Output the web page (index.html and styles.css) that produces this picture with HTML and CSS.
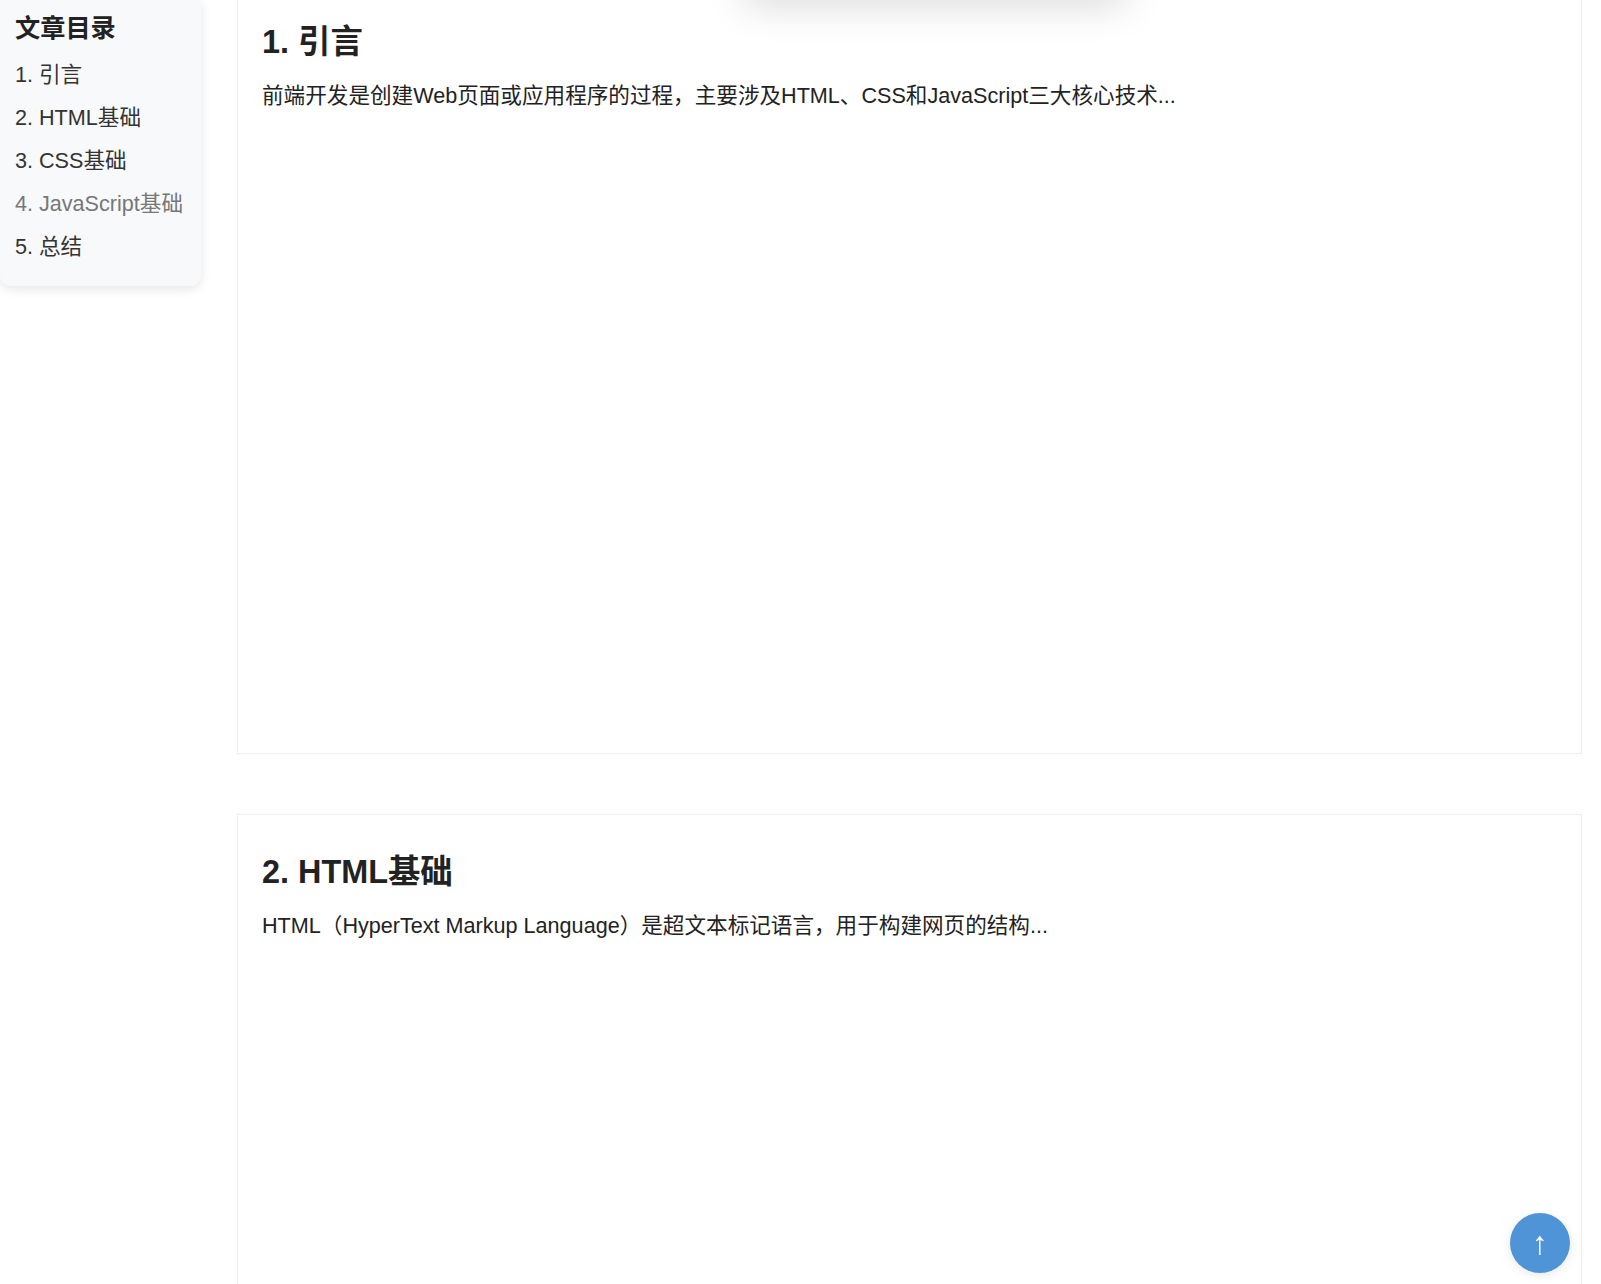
FILE: index.html
```html
<!DOCTYPE html>
<html lang="zh-CN">
<head>
<meta charset="utf-8">
<title>前端开发</title>
<link rel="stylesheet" href="styles.css">
</head>
<body>
	<div class="top-glow"></div>
	<div class="page">
		<div class="toc">
			<h3>文章目录</h3>
			<ul>
				<li><a href="#s1">1. 引言</a></li>
				<li><a href="#s2">2. HTML基础</a></li>
				<li><a href="#s3">3. CSS基础</a></li>
				<li class="current"><a href="#s4">4. JavaScript基础</a></li>
				<li><a href="#s5">5. 总结</a></li>
			</ul>
		</div>
		<div class="content">
			<div class="section" id="s1">
				<h2>1. 引言</h2>
				<p>前端开发是创建Web页面或应用程序的过程，主要涉及HTML、CSS和JavaScript三大核心技术...</p>
			</div>
			<div class="section" id="s2">
				<h2>2. HTML基础</h2>
				<p>HTML（HyperText Markup Language）是超文本标记语言，用于构建网页的结构...</p>
			</div>
		</div>
	</div>
	<button class="back-top" type="button">↑</button>
</body>
</html>
```

FILE: styles.css
```css
* {
	margin: 0;
	padding: 0;
	box-sizing: border-box;
}

html, body {
	height: 100%;
	overflow: hidden;
}

body {
	background: #fff;
	color: #222;
	font-family: "Liberation Sans", "Noto Sans CJK SC", sans-serif;
	font-size: 21.6px;
}

ul {
	list-style: none;
}

a {
	color: inherit;
	text-decoration: none;
}

.page {
	display: flex;
	align-items: flex-start;
	gap: 36px;
	height: 100vh;
	padding-right: 19px;
	overflow: hidden;
}

.toc {
	flex: none;
	width: 201px;
	padding: 9px 15px 18px;
	background: #f8f9fa;
	border-radius: 0 0 11px 11px;
	box-shadow: 0 3px 11px rgba(0, 0, 0, 0.1);
}

.toc h3 {
	font-size: 25.2px;
	line-height: 38px;
	margin-bottom: 6px;
}

.toc li {
	height: 43px;
	line-height: 43px;
	color: #333;
	white-space: nowrap;
}

.toc li.current {
	color: #777;
}

.content {
	flex: 1;
	display: flex;
	flex-direction: column;
	gap: 60px;
	margin-top: -16px;
}

.section {
	flex: none;
	height: 770px;
	padding: 35px 24px 24px;
	border: 1px solid #eee;
}

.section h2 {
	font-size: 32.4px;
	line-height: 44px;
	margin-bottom: 16px;
}

.section p {
	line-height: 32px;
}

.top-glow {
	position: absolute;
	top: -40px;
	left: 745px;
	width: 380px;
	height: 40px;
	background: #fff;
	box-shadow: 0 4px 40px rgba(0, 0, 0, 0.16);
}

.back-top {
	position: fixed;
	right: 31px;
	bottom: 11px;
	width: 60px;
	height: 60px;
	border: none;
	border-radius: 50%;
	background: #4f94d6;
	color: #fff;
	font-family: "Liberation Sans", sans-serif;
	font-size: 32px;
	box-shadow: 0 2px 10px rgba(0, 0, 0, 0.1);
}
```
